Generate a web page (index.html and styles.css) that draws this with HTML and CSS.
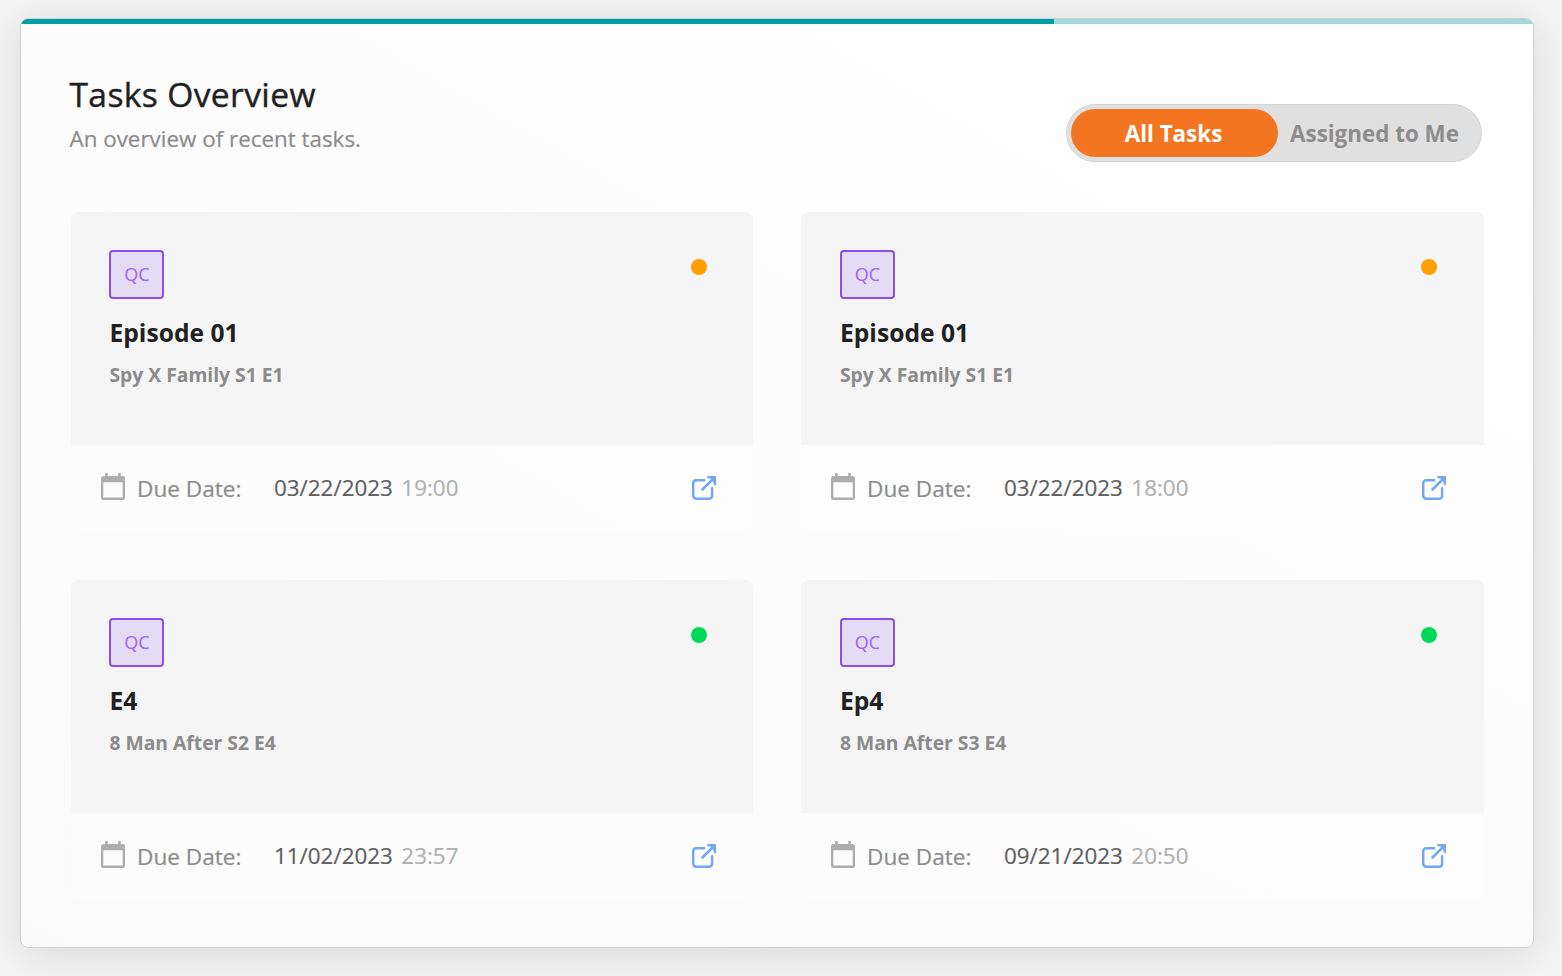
FILE: index.html
```html
<!DOCTYPE html>
<html lang="en">
<head>
<meta charset="utf-8">
<title>Tasks Overview</title>
<link rel="stylesheet" href="styles.css">
</head>
<body>
<svg class="sprite" width="0" height="0" aria-hidden="true">
  <symbol id="calendar" viewBox="0 0 24 27">
    <path fill="currentColor" fill-rule="evenodd" d="M4.200 0h2.600v3h10.400V0h2.600v3h1.700a2.500 2.500 0 0 1 2.500 2.500v19a2.500 2.500 0 0 1-2.500 2.500h-19A2.500 2.500 0 0 1 0 24.500v-19A2.500 2.500 0 0 1 2.500 3H4.200zM2.300 9.300v15.300h19.400V9.300z"/>
  </symbol>
  <symbol id="external" viewBox="0 0 24 24">
    <path fill="none" stroke="currentColor" stroke-width="2.500" stroke-linecap="round" d="M12.200 4.200H4.200a3 3 0 0 0-3 3v12.600a3 3 0 0 0 3 3h12.900a3 3 0 0 0 3-3v-7.500M10.500 13.500L21.500 2.500"/>
    <path fill="currentColor" d="M16 0h7a1 1 0 0 1 1 1v7.300a1.100 1.100 0 0 1-2.200 0L21 5.300 18.500 2.500 16 2.200A1.100 1.100 0 0 1 16 0z"/>
  </symbol>
</svg>
<main class="panel">
  <div class="progress"><div class="progress-fill"></div></div>
  <header class="header">
    <div>
      <h1 class="title">Tasks Overview</h1>
      <p class="subtitle">An overview of recent tasks.</p>
    </div>
    <div class="toggle">
      <button class="option active">All Tasks</button>
      <button class="option">Assigned to Me</button>
    </div>
  </header>
  <section class="grid">
    <article class="card">
      <div class="body">
        <div class="top"><span class="tag">QC</span><span class="dot orange"></span></div>
        <h2 class="name">Episode 01</h2>
        <p class="series">Spy X Family S1 E1</p>
      </div>
      <div class="footer"><svg class="cal"><use href="#calendar"/></svg><span class="label">Due Date:</span><span class="date">03/22/2023</span><span class="time">19:00</span><svg class="ext"><use href="#external"/></svg></div>
    </article>
    <article class="card second">
      <div class="body">
        <div class="top"><span class="tag">QC</span><span class="dot orange"></span></div>
        <h2 class="name">Episode 01</h2>
        <p class="series">Spy X Family S1 E1</p>
      </div>
      <div class="footer"><svg class="cal"><use href="#calendar"/></svg><span class="label">Due Date:</span><span class="date">03/22/2023</span><span class="time">18:00</span><svg class="ext"><use href="#external"/></svg></div>
    </article>
    <article class="card">
      <div class="body">
        <div class="top"><span class="tag">QC</span><span class="dot green"></span></div>
        <h2 class="name">E4</h2>
        <p class="series">8 Man After S2 E4</p>
      </div>
      <div class="footer"><svg class="cal"><use href="#calendar"/></svg><span class="label">Due Date:</span><span class="date">11/02/2023</span><span class="time">23:57</span><svg class="ext"><use href="#external"/></svg></div>
    </article>
    <article class="card second">
      <div class="body">
        <div class="top"><span class="tag">QC</span><span class="dot green"></span></div>
        <h2 class="name">Ep4</h2>
        <p class="series">8 Man After S3 E4</p>
      </div>
      <div class="footer"><svg class="cal"><use href="#calendar"/></svg><span class="label">Due Date:</span><span class="date">09/21/2023</span><span class="time">20:50</span><svg class="ext"><use href="#external"/></svg></div>
    </article>
  </section>
</main>
</body>
</html>
```
FILE: styles.css
```css
* { box-sizing: border-box; margin: 0; }
body {
  height: 976px;
  padding: 18px 28px 28px 20px;
  background: #f4f4f4;
  font-family: "Open Sans", "Noto Sans", sans-serif;
  font-kerning: none;
  overflow: hidden;
}
.sprite { position: absolute; }
.panel {
  width: 1514px;
  height: 930px;
  border: 1px solid #d0d0d0;
  border-radius: 8px;
  overflow: hidden;
  background: linear-gradient(30deg, #fafafa, #fcfcfc 50%, #fff);
  box-shadow: 0 6px 40px rgba(0, 0, 0, .11);
}
.progress { height: 5px; background: #9ed9db; }
.progress-fill { width: 1033px; height: 5px; background: #009fa7; }
.header {
  display: flex;
  justify-content: space-between;
  height: 188px;
  padding: 46px 51px 0 48.500px;
}
.title {
  font-size: 33.600px;
  font-weight: 400;
  line-height: 48px;
  letter-spacing: .37px;
  color: #212121;
  -webkit-text-stroke: .4px #212121;
}
.subtitle {
  margin-top: 5px;
  font-size: 22.400px;
  line-height: 32px;
  color: #8b8b8b;
  -webkit-text-stroke: .2px #8b8b8b;
}
.toggle {
  display: flex;
  width: 416px;
  height: 58px;
  margin-top: 34px;
  padding: 4px;
  border: 1px solid #d4d4d4;
  border-radius: 29px;
  background: #e0e0e0;
}
.option {
  flex: 1;
  padding: 0 6px 0 0;
  border: 0;
  border-radius: 24px;
  background: none;
  color: #8c8c8c;
  font: 700 22.400px "Open Sans", "Noto Sans", sans-serif;
  font-kerning: none;
  white-space: nowrap;
}
.active { flex: 0 0 207px; height: 48px; padding: 0 2px 0 0; background: #f47521; color: #fff; }
.grid {
  display: grid;
  grid-template-columns: 682px 683px;
  grid-auto-rows: 320px;
  gap: 48px;
  margin-left: 50px;
}
.card { border-radius: 8px; overflow: hidden; background: rgba(253, 253, 253, .5); }
.body { height: 233px; padding: 38px; background: #f5f5f5; }
.top { display: flex; justify-content: space-between; }
.tag {
  display: flex;
  align-items: center;
  justify-content: center;
  width: 55px;
  height: 49px;
  padding: 0 0 1px 1px;
  border: 2px solid #8950e8;
  border-radius: 4px;
  background: #e4dbf5;
  color: #9b62fa;
  font-size: 18px;
}
.dot { width: 16px; height: 16px; margin: 9px 8px 0 0; border-radius: 50%; }
.orange { background: #ff9f00; }
.green { background: #00d85a; }
.name { margin: 16px 0 0 .5px; font-size: 24.640px; font-weight: 700; line-height: 36px; color: #212121; }
.series { margin: 9px 0 0 .5px; font-size: 19.300px; font-weight: 700; line-height: 30px; color: #8b8b8b; }
.footer {
  display: flex;
  align-items: center;
  height: 87px;
  padding: 0 37px 0 30px;
  font-size: 22.400px;
  line-height: 32px;
  -webkit-text-stroke-width: .2px;
}
.second .body { padding: 38px 39px; }
.second .tag { padding-left: 0; }
.second .name, .second .series { margin-left: 0; }
.second .footer { padding-right: 38px; }
.cal { width: 24px; height: 27px; margin-right: 12px; margin-top: -4px; color: #adadad; }
.label { width: 137px; font-size: 22.600px; color: #8b8b8b; }
.date { margin-right: 8.500px; margin-top: -1px; color: #5f5f5f; }
.time { margin-top: -1px; color: #b0b0b0; }
.ext { width: 24px; height: 24px; margin-top: -1px; margin-left: auto; color: #72a7f6; }
```
